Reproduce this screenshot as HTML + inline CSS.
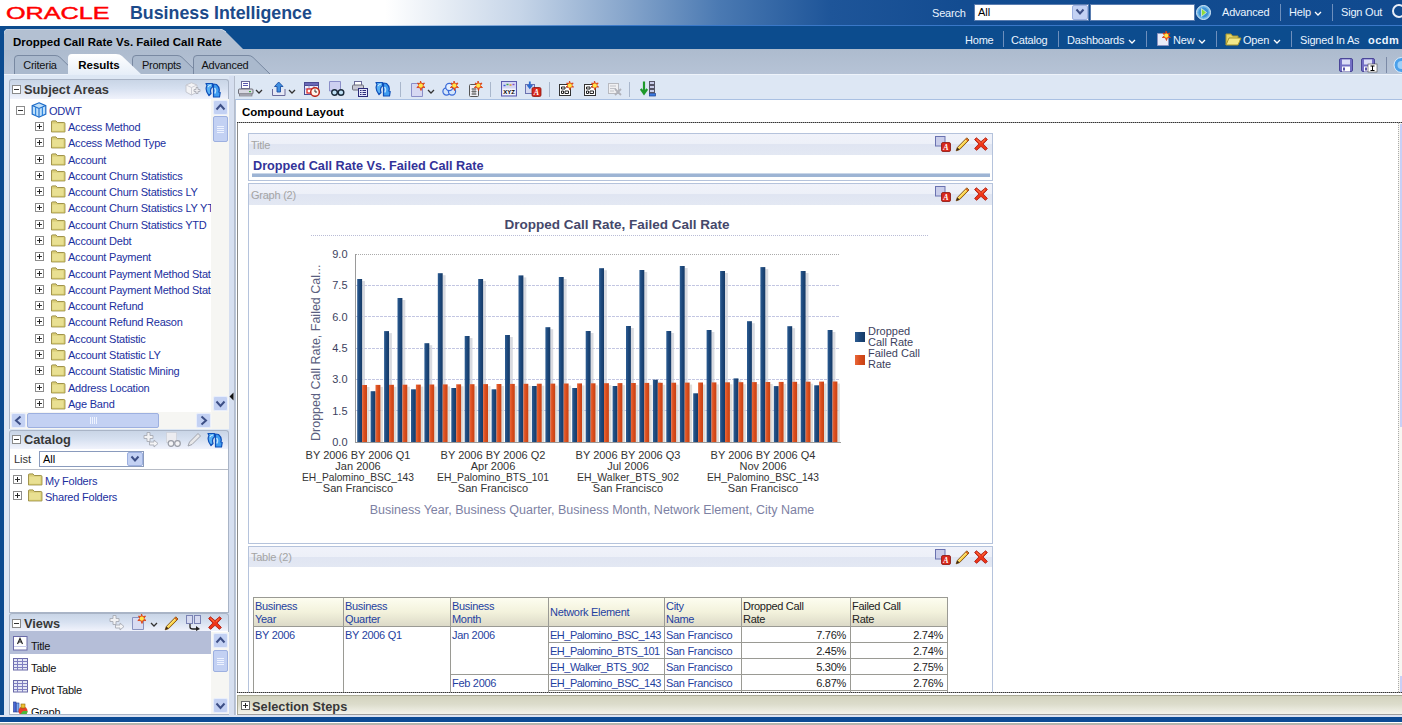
<!DOCTYPE html>
<html>
<head>
<meta charset="utf-8">
<title>Oracle Business Intelligence</title>
<style>
*{box-sizing:border-box;margin:0;padding:0}
html,body{width:1402px;height:725px;overflow:hidden;background:#fff;font-family:"Liberation Sans","DejaVu Sans",sans-serif;font-size:11px;color:#000}
.a{position:absolute}
.t{position:absolute;white-space:nowrap;line-height:14px}
#root{position:relative;width:1402px;height:725px;overflow:hidden;background:#dfe8f4}
#h1{left:0;top:0;width:1402px;height:26px;background:linear-gradient(to right,#ffffff 0,#ffffff 385px,#c6d5e8 520px,#8aa8cd 620px,#4a79b2 720px,#1e5599 830px,#134c91 960px,#104a8f 1402px)}
#h1line{left:330px;top:25px;width:1072px;height:1px;background:linear-gradient(to right,rgba(60,120,200,0),#3a78c8 300px)}
#h2{left:0;top:26px;width:1402px;height:23px;background:#0c4c8e}
#leftedge{left:0;top:26px;width:4px;height:699px;background:#0b4b90}
#logo{left:6px;top:3px;font-size:16.8px;color:#f00;transform:scaleX(1.5);transform-origin:0 0;line-height:22px;-webkit-text-stroke:0.45px #f00}
#bi{left:130px;top:2px;font-size:17.8px;font-weight:bold;color:#1c4a8a;line-height:22px}
.hl{color:#eaf4ff;font-size:11px;letter-spacing:-0.2px}
.sep{position:absolute;width:1px;background:#6d8fbd}
.tab{position:absolute;top:55px;height:20px;padding-top:1px;font-size:11px;letter-spacing:-0.25px;line-height:19px;text-align:center;color:#111}
.tree{color:#1b2f9e;font-size:11px;letter-spacing:-0.22px}
.ph{font-weight:bold;font-size:12.8px;color:#383838;line-height:16px}
.vh{color:#a4a4a4;font-size:11px;letter-spacing:-0.25px}
.pm{position:absolute;width:9px;height:9px;border:1px solid #8c8c8c;background:#fff}
.pm:before{content:"";position:absolute;left:1px;top:3px;width:5px;height:1px;background:#333}
.pm.p:after{content:"";position:absolute;left:3px;top:1px;width:1px;height:5px;background:#222}
.fold{position:absolute;width:15px;height:11px;background:linear-gradient(#ece49a,#cfc36a);border:1px solid #9a8c3a;border-radius:1px}
.fold:before{content:"";position:absolute;left:-1px;top:-3px;width:7px;height:3px;background:#ddd27e;border:1px solid #9a8c3a;border-bottom:none;border-radius:1px 1px 0 0}
.sb{position:absolute;background:#c3d1f3;border:1px solid #e8eefc;border-radius:2px}
.sbt{position:absolute;background:#f6f6f3}
.chev{position:absolute;width:7px;height:7px;border:solid #3d4f86;border-width:2px 2px 0 0}
.band{position:absolute;background:linear-gradient(#f0f2fa 0,#edf0f8 50%,#e0e5f2 50%,#e3e8f3 100%)}
.view{position:absolute;border:1px solid #b5c3dc;background:#fff}
.cx{color:#3a3a3a;font-family:"Liberation Sans",sans-serif}
table{border-collapse:collapse}
</style>
</head>
<body>
<div id="root">
<div class="a" id="h1"></div><div class="a" id="h1line"></div><div class="a" id="h2"></div><div class="a" id="leftedge"></div>
<div class="t" id="logo">ORACLE</div>
<div class="t" id="bi">Business Intelligence</div>
<div class="t hl" style="left:932px;top:6px;">Search</div>
<div class="a" style="left:974px;top:4px;width:115px;height:17px;background:#fff;border:1px solid #5a7db0"></div>
<div class="t" style="left:978px;top:5px;font-size:11px;color:#000">All</div>
<div class="a" style="left:1072px;top:5px;width:16px;height:15px;background:#c3d1f3;border:1px solid #9db0e0;border-radius:2px"></div>
<svg class="a" style="left:1075px;top:8px" width="10" height="8" viewBox="0 0 10 8"><path d="M1.5 1.5 L5 5.5 L8.5 1.5" fill="none" stroke="#3d4f86" stroke-width="2"/></svg>
<div class="a" style="left:1090px;top:4px;width:105px;height:17px;background:#fff;border:1px solid #5a7db0"></div>
<svg class="a" style="left:1196px;top:5px" width="15" height="15" viewBox="0 0 15 15"><circle cx="7.5" cy="7.5" r="7" fill="#6fb6e8" stroke="#d9ecfa" stroke-width="1"/><circle cx="7.5" cy="7.5" r="5" fill="#3f94d6"/><path d="M5.5 3.5 L10.5 7.5 L5.5 11.5 Z" fill="#8fdc3a" stroke="#fff" stroke-width="0.6"/></svg>
<div class="t hl" style="left:1222px;top:5px;">Advanced</div>
<div class="sep" style="left:1280px;top:4px;height:17px;background:#6d8fbd"></div>
<div class="t hl" style="left:1289px;top:5px;">Help</div>
<svg class="a" style="left:1314px;top:11px" width="8" height="6" viewBox="0 0 8 6"><path d="M1 1 L4 4 L7 1" fill="none" stroke="#fff" stroke-width="1.3"/></svg>
<div class="sep" style="left:1332px;top:4px;height:17px;background:#6d8fbd"></div>
<div class="t hl" style="left:1341px;top:5px;">Sign Out</div>
<svg class="a" style="left:1391px;top:4px" width="11" height="16" viewBox="0 0 11 16"><circle cx="8" cy="7" r="6" fill="none" stroke="#e8eef8" stroke-width="2"/></svg>
<div class="t hl" style="left:965px;top:33px;">Home</div>
<div class="sep" style="left:1003px;top:31px;height:16px;background:#6d8fbd"></div>
<div class="t hl" style="left:1011px;top:33px;">Catalog</div>
<div class="sep" style="left:1058px;top:31px;height:16px;background:#6d8fbd"></div>
<div class="t hl" style="left:1067px;top:33px;">Dashboards</div>
<svg class="a" style="left:1128px;top:39px" width="8" height="6" viewBox="0 0 8 6"><path d="M1 1 L4 4 L7 1" fill="none" stroke="#fff" stroke-width="1.3"/></svg>
<div class="sep" style="left:1146px;top:31px;height:16px;background:#6d8fbd"></div>
<svg class="a" style="left:1155px;top:31px" width="16" height="16" viewBox="0 0 16 16"><path d="M2.5 2.5 H10 L13.5 6 V14.5 H2.5 Z" fill="#e8ecf8" stroke="#8a93c0"/><path d="M11 0 L12.2 2.8 L15 2 L13.4 4.5 L15.5 6.5 L12.5 6.6 L11.5 9.5 L10.3 6.6 L7.3 6.5 L9.5 4.5 L8 2 L10.5 2.8 Z" fill="#f0641e" stroke="#d83a10" stroke-width="0.8"/><circle cx="11.3" cy="4.6" r="2.100" fill="#ffe648"/></svg>
<div class="t hl" style="left:1173px;top:33px;">New</div>
<svg class="a" style="left:1198px;top:39px" width="8" height="6" viewBox="0 0 8 6"><path d="M1 1 L4 4 L7 1" fill="none" stroke="#fff" stroke-width="1.3"/></svg>
<div class="sep" style="left:1216px;top:31px;height:16px;background:#6d8fbd"></div>
<svg class="a" style="left:1225px;top:32px" width="17" height="14" viewBox="0 0 17 14"><path d="M1 13 V2 H6 L7.5 4 H13 V6" fill="#e4d56a" stroke="#a8962c"/><path d="M1 13 L4 6 H16 L13 13 Z" fill="#f2e88a" stroke="#a8962c"/></svg>
<div class="t hl" style="left:1243px;top:33px;">Open</div>
<svg class="a" style="left:1273px;top:39px" width="8" height="6" viewBox="0 0 8 6"><path d="M1 1 L4 4 L7 1" fill="none" stroke="#fff" stroke-width="1.3"/></svg>
<div class="sep" style="left:1291px;top:31px;height:16px;background:#6d8fbd"></div>
<div class="t hl" style="left:1300px;top:33px;">Signed In As</div>
<div class="t hl" style="left:1368px;top:33px;font-weight:bold;letter-spacing:0.5px">ocdm</div>
<div class="a" style="left:4px;top:49px;width:1398px;height:26px;background:linear-gradient(#adbbce,#b6c3d6)"></div>
<svg class="a" style="left:4px;top:29px" width="250" height="21" viewBox="0 0 250 21"><path d="M0 21 V5 Q0 0 5 0 H214 Q219 0 222 3 L240 21 Z" fill="#b3c0d2"/><path d="M0 5 Q0 0 5 0 H214 Q219 0 222 3" fill="none" stroke="#d3dde9" stroke-width="1"/></svg>
<div class="t" style="left:13px;top:35px;font-size:11.5px;font-weight:bold;color:#000;letter-spacing:0px">Dropped Call Rate Vs. Failed Call Rate</div>
<div class="a" style="left:4px;top:74px;width:1398px;height:642px;background:#dde7f4"></div>
<div class="a" style="left:4px;top:74px;width:1398px;height:1px;background:#eef3fa"></div>
<svg class="a" style="left:14px;top:55px" width="71" height="19" viewBox="0 0 71 20" preserveAspectRatio="none"><path d="M0.5 20 V4 Q0.5 0.5 4 0.5 H41 Q44 0.5 46 2.5 L63 20" fill="#aab9cd" stroke="#76879f" stroke-width="1"/></svg>
<svg class="a" style="left:132px;top:55px" width="75" height="19" viewBox="0 0 75 20" preserveAspectRatio="none"><path d="M0.5 20 V4 Q0.5 0.5 4 0.5 H45 Q48 0.5 50 2.5 L67 20" fill="#aab9cd" stroke="#76879f" stroke-width="1"/></svg>
<svg class="a" style="left:193px;top:55px" width="85" height="19" viewBox="0 0 85 20" preserveAspectRatio="none"><path d="M0.5 20 V4 Q0.5 0.5 4 0.5 H55 Q58 0.5 60 2.5 L77 20" fill="#aab9cd" stroke="#76879f" stroke-width="1"/></svg>
<svg class="a" style="left:68px;top:54px" width="78" height="21" viewBox="0 0 78 22" preserveAspectRatio="none"><defs><linearGradient id="ga" x1="0" y1="0" x2="0" y2="1"><stop offset="0" stop-color="#fff"/><stop offset="1" stop-color="#e6eef8"/></linearGradient></defs><path d="M0 22 V4 Q0 0 4 0 H48 Q52 0 54 2 L74 22 Z" fill="url(#ga)"/></svg>
<div class="tab" style="left:14px;width:52px">Criteria</div>
<div class="tab" style="left:68px;width:62px;font-weight:bold;color:#000;font-size:11.5px;letter-spacing:0">Results</div>
<div class="tab" style="left:134px;width:55px">Prompts</div>
<div class="tab" style="left:193px;width:64px">Advanced</div>
<svg class="a" style="left:1339px;top:57px" width="17" height="16" viewBox="0 0 17 16"><rect x="0.5" y="1.5" width="13" height="13" rx="1.5" fill="#7470c4" stroke="#4a4698"/><rect x="3" y="2.5" width="8" height="5" fill="#dcdef6"/><rect x="3" y="9.5" width="8" height="5" fill="#fff"/><rect x="4" y="10.5" width="2" height="3" fill="#5a55a8"/></svg>
<svg class="a" style="left:1361px;top:57px" width="17" height="16" viewBox="0 0 17 16"><rect x="0.5" y="1.5" width="13" height="13" rx="1.5" fill="#7470c4" stroke="#4a4698"/><rect x="3" y="2.5" width="8" height="5" fill="#dcdef6"/><rect x="3" y="9.5" width="8" height="5" fill="#fff"/><rect x="4" y="10.5" width="2" height="3" fill="#5a55a8"/><rect x="7" y="7" width="9" height="8" fill="#fff" stroke="#444" stroke-width="0.6"/><path d="M9.5 9 H13.5 M11.5 9 V13.5 M9.5 13.5 H13.5" stroke="#000" stroke-width="1" fill="none"/></svg>
<div class="sep" style="left:1386px;top:57px;height:16px;background:#7b8aa6"></div>
<svg class="a" style="left:1393px;top:57px" width="9" height="16" viewBox="0 0 9 16"><circle cx="8.5" cy="8" r="7.5" fill="#4aa0ea" stroke="#dfeefc"/><circle cx="8.5" cy="8" r="4" fill="#9fd0f8"/></svg>
<div class="a" style="left:9px;top:79px;width:220px;height:21px;background:linear-gradient(#c9d5e6,#d6e0f0 45%,#f1f3fc);border:1px solid #a9b4c6;border-bottom:1px solid #d4dae6;border-radius:3px 3px 0 0"></div>
<div class="pm" style="left:12px;top:85px;border-color:#8a8a8a"></div>
<div class="t ph" style="left:24px;top:82px">Subject Areas</div>
<svg class="a" style="left:185px;top:82px" width="16" height="16" viewBox="0 0 16 16"><path d="M6.500 0.8 L12 3 V10 L6.500 13 L1 10 V3 Z" fill="#f4f4f6" stroke="#c2c4cc" stroke-width="0.9"/><path d="M1 3 L6.500 5.500 L12 3 M6.500 5.500 V13" fill="none" stroke="#c8cad2" stroke-width="0.9"/><path d="M9 7.500 H11 V5.500 H13 V7.500 H15 V9.500 H13 V11.500 H11 V9.500 H9 Z" fill="#ececf0" stroke="#a4a7b0" stroke-width="0.8"/></svg>
<svg class="a" style="left:205px;top:82px" width="16" height="16" viewBox="0 0 16 16"><path d="M1 1.500 H7.500 V5 Q4.500 6.500 6 11.500 L4 13.500 Q-0.5 8 2 3.500 Z" fill="#58b0f4" stroke="#0f4fb8" stroke-width="1.200" stroke-linejoin="round"/><path d="M8.500 2 L11.500 2.500 Q15.500 6 13.800 10 L15.200 10.500 L14.500 15 H8.500 Z" fill="#3f9cf0" stroke="#0f4fb8" stroke-width="1.200" stroke-linejoin="round"/><path d="M9.500 6 Q11.500 8 9.800 11.500" fill="none" stroke="#bfe2ff" stroke-width="1.400"/><path d="M3 5 Q3.500 3.500 6 3" fill="none" stroke="#c8e8ff" stroke-width="1.200"/></svg>
<div class="a" style="left:9px;top:99px;width:220px;height:330px;background:#fff;border:1px solid #a9b4c6;border-top:none"></div>
<div class="pm" style="left:16px;top:106px"></div>
<svg class="a" style="left:31px;top:102px" width="16" height="16" viewBox="0 0 16 16"><path d="M8 0.8 L14.8 3.6 V12 L8 15.2 L1.2 12 V3.6 Z" fill="#bfe0fa" stroke="#1c6bc8" stroke-width="1.2"/><path d="M1.2 3.6 L8 6.4 L14.8 3.6 M8 6.4 V15.2" fill="none" stroke="#1c6bc8" stroke-width="1.1"/><path d="M4.6 5 V13.6 M11.4 5 V13.6" stroke="#2f86e0" stroke-width="1.2"/></svg>
<div class="t tree" style="left:49px;top:104px">ODWT</div>
<div class="a" style="left:10px;top:99px;width:201px;height:313px;overflow:hidden">
<div class="pm p" style="left:25px;top:23.0px"></div>
<svg class="a" style="left:41px;top:21.0px" width="14.500" height="13" viewBox="0 0 16 14"><path d="M0.5 13 V2 Q0.5 0.8 1.8 0.8 H5.5 L7 2.6 H14.2 Q15.4 2.6 15.4 3.8 V13 Z" fill="#d9cd78" stroke="#8e7f30" stroke-width="0.9"/><rect x="1.4" y="3.8" width="13.2" height="8.6" fill="#e9e092"/><path d="M1.4 12.4 H14.6 V4" fill="none" stroke="#bfb25a" stroke-width="1"/></svg>
<div class="t tree" style="left:58px;top:21.0px">Access Method</div>
<div class="pm p" style="left:25px;top:39.3px"></div>
<svg class="a" style="left:41px;top:37.3px" width="14.500" height="13" viewBox="0 0 16 14"><path d="M0.5 13 V2 Q0.5 0.8 1.8 0.8 H5.5 L7 2.6 H14.2 Q15.4 2.6 15.4 3.8 V13 Z" fill="#d9cd78" stroke="#8e7f30" stroke-width="0.9"/><rect x="1.4" y="3.8" width="13.2" height="8.6" fill="#e9e092"/><path d="M1.4 12.4 H14.6 V4" fill="none" stroke="#bfb25a" stroke-width="1"/></svg>
<div class="t tree" style="left:58px;top:37.3px">Access Method Type</div>
<div class="pm p" style="left:25px;top:55.6px"></div>
<svg class="a" style="left:41px;top:53.6px" width="14.500" height="13" viewBox="0 0 16 14"><path d="M0.5 13 V2 Q0.5 0.8 1.8 0.8 H5.5 L7 2.6 H14.2 Q15.4 2.6 15.4 3.8 V13 Z" fill="#d9cd78" stroke="#8e7f30" stroke-width="0.9"/><rect x="1.4" y="3.8" width="13.2" height="8.6" fill="#e9e092"/><path d="M1.4 12.4 H14.6 V4" fill="none" stroke="#bfb25a" stroke-width="1"/></svg>
<div class="t tree" style="left:58px;top:53.6px">Account</div>
<div class="pm p" style="left:25px;top:71.8px"></div>
<svg class="a" style="left:41px;top:69.8px" width="14.500" height="13" viewBox="0 0 16 14"><path d="M0.5 13 V2 Q0.5 0.8 1.8 0.8 H5.5 L7 2.6 H14.2 Q15.4 2.6 15.4 3.8 V13 Z" fill="#d9cd78" stroke="#8e7f30" stroke-width="0.9"/><rect x="1.4" y="3.8" width="13.2" height="8.6" fill="#e9e092"/><path d="M1.4 12.4 H14.6 V4" fill="none" stroke="#bfb25a" stroke-width="1"/></svg>
<div class="t tree" style="left:58px;top:69.8px">Account Churn Statistics</div>
<div class="pm p" style="left:25px;top:88.1px"></div>
<svg class="a" style="left:41px;top:86.1px" width="14.500" height="13" viewBox="0 0 16 14"><path d="M0.5 13 V2 Q0.5 0.8 1.8 0.8 H5.5 L7 2.6 H14.2 Q15.4 2.6 15.4 3.8 V13 Z" fill="#d9cd78" stroke="#8e7f30" stroke-width="0.9"/><rect x="1.4" y="3.8" width="13.2" height="8.6" fill="#e9e092"/><path d="M1.4 12.4 H14.6 V4" fill="none" stroke="#bfb25a" stroke-width="1"/></svg>
<div class="t tree" style="left:58px;top:86.1px">Account Churn Statistics LY</div>
<div class="pm p" style="left:25px;top:104.4px"></div>
<svg class="a" style="left:41px;top:102.4px" width="14.500" height="13" viewBox="0 0 16 14"><path d="M0.5 13 V2 Q0.5 0.8 1.8 0.8 H5.5 L7 2.6 H14.2 Q15.4 2.6 15.4 3.8 V13 Z" fill="#d9cd78" stroke="#8e7f30" stroke-width="0.9"/><rect x="1.4" y="3.8" width="13.2" height="8.6" fill="#e9e092"/><path d="M1.4 12.4 H14.6 V4" fill="none" stroke="#bfb25a" stroke-width="1"/></svg>
<div class="t tree" style="left:58px;top:102.4px">Account Churn Statistics LY YTD</div>
<div class="pm p" style="left:25px;top:120.7px"></div>
<svg class="a" style="left:41px;top:118.7px" width="14.500" height="13" viewBox="0 0 16 14"><path d="M0.5 13 V2 Q0.5 0.8 1.8 0.8 H5.5 L7 2.6 H14.2 Q15.4 2.6 15.4 3.8 V13 Z" fill="#d9cd78" stroke="#8e7f30" stroke-width="0.9"/><rect x="1.4" y="3.8" width="13.2" height="8.6" fill="#e9e092"/><path d="M1.4 12.4 H14.6 V4" fill="none" stroke="#bfb25a" stroke-width="1"/></svg>
<div class="t tree" style="left:58px;top:118.7px">Account Churn Statistics YTD</div>
<div class="pm p" style="left:25px;top:137.0px"></div>
<svg class="a" style="left:41px;top:135.0px" width="14.500" height="13" viewBox="0 0 16 14"><path d="M0.5 13 V2 Q0.5 0.8 1.8 0.8 H5.5 L7 2.6 H14.2 Q15.4 2.6 15.4 3.8 V13 Z" fill="#d9cd78" stroke="#8e7f30" stroke-width="0.9"/><rect x="1.4" y="3.8" width="13.2" height="8.6" fill="#e9e092"/><path d="M1.4 12.4 H14.6 V4" fill="none" stroke="#bfb25a" stroke-width="1"/></svg>
<div class="t tree" style="left:58px;top:135.0px">Account Debt</div>
<div class="pm p" style="left:25px;top:153.2px"></div>
<svg class="a" style="left:41px;top:151.2px" width="14.500" height="13" viewBox="0 0 16 14"><path d="M0.5 13 V2 Q0.5 0.8 1.8 0.8 H5.5 L7 2.6 H14.2 Q15.4 2.6 15.4 3.8 V13 Z" fill="#d9cd78" stroke="#8e7f30" stroke-width="0.9"/><rect x="1.4" y="3.8" width="13.2" height="8.6" fill="#e9e092"/><path d="M1.4 12.4 H14.6 V4" fill="none" stroke="#bfb25a" stroke-width="1"/></svg>
<div class="t tree" style="left:58px;top:151.2px">Account Payment</div>
<div class="pm p" style="left:25px;top:169.5px"></div>
<svg class="a" style="left:41px;top:167.5px" width="14.500" height="13" viewBox="0 0 16 14"><path d="M0.5 13 V2 Q0.5 0.8 1.8 0.8 H5.5 L7 2.6 H14.2 Q15.4 2.6 15.4 3.8 V13 Z" fill="#d9cd78" stroke="#8e7f30" stroke-width="0.9"/><rect x="1.4" y="3.8" width="13.2" height="8.6" fill="#e9e092"/><path d="M1.4 12.4 H14.6 V4" fill="none" stroke="#bfb25a" stroke-width="1"/></svg>
<div class="t tree" style="left:58px;top:167.5px">Account Payment Method Statistics</div>
<div class="pm p" style="left:25px;top:185.8px"></div>
<svg class="a" style="left:41px;top:183.8px" width="14.500" height="13" viewBox="0 0 16 14"><path d="M0.5 13 V2 Q0.5 0.8 1.8 0.8 H5.5 L7 2.6 H14.2 Q15.4 2.6 15.4 3.8 V13 Z" fill="#d9cd78" stroke="#8e7f30" stroke-width="0.9"/><rect x="1.4" y="3.8" width="13.2" height="8.6" fill="#e9e092"/><path d="M1.4 12.4 H14.6 V4" fill="none" stroke="#bfb25a" stroke-width="1"/></svg>
<div class="t tree" style="left:58px;top:183.8px">Account Payment Method Statistics LY</div>
<div class="pm p" style="left:25px;top:202.1px"></div>
<svg class="a" style="left:41px;top:200.1px" width="14.500" height="13" viewBox="0 0 16 14"><path d="M0.5 13 V2 Q0.5 0.8 1.8 0.8 H5.5 L7 2.6 H14.2 Q15.4 2.6 15.4 3.8 V13 Z" fill="#d9cd78" stroke="#8e7f30" stroke-width="0.9"/><rect x="1.4" y="3.8" width="13.2" height="8.6" fill="#e9e092"/><path d="M1.4 12.4 H14.6 V4" fill="none" stroke="#bfb25a" stroke-width="1"/></svg>
<div class="t tree" style="left:58px;top:200.1px">Account Refund</div>
<div class="pm p" style="left:25px;top:218.4px"></div>
<svg class="a" style="left:41px;top:216.4px" width="14.500" height="13" viewBox="0 0 16 14"><path d="M0.5 13 V2 Q0.5 0.8 1.8 0.8 H5.5 L7 2.6 H14.2 Q15.4 2.6 15.4 3.8 V13 Z" fill="#d9cd78" stroke="#8e7f30" stroke-width="0.9"/><rect x="1.4" y="3.8" width="13.2" height="8.6" fill="#e9e092"/><path d="M1.4 12.4 H14.6 V4" fill="none" stroke="#bfb25a" stroke-width="1"/></svg>
<div class="t tree" style="left:58px;top:216.4px">Account Refund Reason</div>
<div class="pm p" style="left:25px;top:234.6px"></div>
<svg class="a" style="left:41px;top:232.6px" width="14.500" height="13" viewBox="0 0 16 14"><path d="M0.5 13 V2 Q0.5 0.8 1.8 0.8 H5.5 L7 2.6 H14.2 Q15.4 2.6 15.4 3.8 V13 Z" fill="#d9cd78" stroke="#8e7f30" stroke-width="0.9"/><rect x="1.4" y="3.8" width="13.2" height="8.6" fill="#e9e092"/><path d="M1.4 12.4 H14.6 V4" fill="none" stroke="#bfb25a" stroke-width="1"/></svg>
<div class="t tree" style="left:58px;top:232.6px">Account Statistic</div>
<div class="pm p" style="left:25px;top:250.9px"></div>
<svg class="a" style="left:41px;top:248.9px" width="14.500" height="13" viewBox="0 0 16 14"><path d="M0.5 13 V2 Q0.5 0.8 1.8 0.8 H5.5 L7 2.6 H14.2 Q15.4 2.6 15.4 3.8 V13 Z" fill="#d9cd78" stroke="#8e7f30" stroke-width="0.9"/><rect x="1.4" y="3.8" width="13.2" height="8.6" fill="#e9e092"/><path d="M1.4 12.4 H14.6 V4" fill="none" stroke="#bfb25a" stroke-width="1"/></svg>
<div class="t tree" style="left:58px;top:248.9px">Account Statistic LY</div>
<div class="pm p" style="left:25px;top:267.2px"></div>
<svg class="a" style="left:41px;top:265.2px" width="14.500" height="13" viewBox="0 0 16 14"><path d="M0.5 13 V2 Q0.5 0.8 1.8 0.8 H5.5 L7 2.6 H14.2 Q15.4 2.6 15.4 3.8 V13 Z" fill="#d9cd78" stroke="#8e7f30" stroke-width="0.9"/><rect x="1.4" y="3.8" width="13.2" height="8.6" fill="#e9e092"/><path d="M1.4 12.4 H14.6 V4" fill="none" stroke="#bfb25a" stroke-width="1"/></svg>
<div class="t tree" style="left:58px;top:265.2px">Account Statistic Mining</div>
<div class="pm p" style="left:25px;top:283.5px"></div>
<svg class="a" style="left:41px;top:281.5px" width="14.500" height="13" viewBox="0 0 16 14"><path d="M0.5 13 V2 Q0.5 0.8 1.8 0.8 H5.5 L7 2.6 H14.2 Q15.4 2.6 15.4 3.8 V13 Z" fill="#d9cd78" stroke="#8e7f30" stroke-width="0.9"/><rect x="1.4" y="3.8" width="13.2" height="8.6" fill="#e9e092"/><path d="M1.4 12.4 H14.6 V4" fill="none" stroke="#bfb25a" stroke-width="1"/></svg>
<div class="t tree" style="left:58px;top:281.5px">Address Location</div>
<div class="pm p" style="left:25px;top:299.8px"></div>
<svg class="a" style="left:41px;top:297.8px" width="14.500" height="13" viewBox="0 0 16 14"><path d="M0.5 13 V2 Q0.5 0.8 1.8 0.8 H5.5 L7 2.6 H14.2 Q15.4 2.6 15.4 3.8 V13 Z" fill="#d9cd78" stroke="#8e7f30" stroke-width="0.9"/><rect x="1.4" y="3.8" width="13.2" height="8.6" fill="#e9e092"/><path d="M1.4 12.4 H14.6 V4" fill="none" stroke="#bfb25a" stroke-width="1"/></svg>
<div class="t tree" style="left:58px;top:297.8px">Age Band</div>
</div>
<div class="sbt" style="left:211px;top:99px;width:18px;height:313px"></div>
<div class="sb" style="left:213px;top:100px;width:15px;height:15px"></div>
<svg class="a" style="left:215px;top:103px" width="11" height="8" viewBox="0 0 11 8"><path d="M1.500 6.500 L5.500 2 L9.500 6.500" fill="none" stroke="#3d4f86" stroke-width="2"/></svg>
<div class="sb" style="left:213px;top:396px;width:15px;height:15px"></div>
<svg class="a" style="left:215px;top:400px" width="11" height="8" viewBox="0 0 11 8"><path d="M1.500 1.500 L5.500 6 L9.500 1.500" fill="none" stroke="#3d4f86" stroke-width="2"/></svg>
<div class="sb" style="left:213px;top:116px;width:15px;height:26px;border-color:#9db0e0"></div>
<div class="a" style="left:217px;top:126px;width:7px;height:1px;background:#eef3ff"></div>
<div class="a" style="left:217px;top:128px;width:7px;height:1px;background:#eef3ff"></div>
<div class="a" style="left:217px;top:130px;width:7px;height:1px;background:#eef3ff"></div>
<div class="a" style="left:217px;top:132px;width:7px;height:1px;background:#eef3ff"></div>
<div class="sbt" style="left:10px;top:412px;width:202px;height:17px"></div>
<div class="a" style="left:212px;top:412px;width:17px;height:17px;background:#f4f4f0"></div>
<div class="sb" style="left:11px;top:413px;width:15px;height:15px"></div>
<svg class="a" style="left:14px;top:415px" width="8" height="11" viewBox="0 0 8 11"><path d="M6.5 1.5 L2 5.5 L6.5 9.5" fill="none" stroke="#3d4f86" stroke-width="2"/></svg>
<div class="sb" style="left:196px;top:413px;width:15px;height:15px"></div>
<svg class="a" style="left:200px;top:415px" width="8" height="11" viewBox="0 0 8 11"><path d="M1.5 1.5 L6 5.5 L1.5 9.5" fill="none" stroke="#3d4f86" stroke-width="2"/></svg>
<div class="sb" style="left:27px;top:413px;width:132px;height:15px;border-color:#9db0e0"></div>
<div class="a" style="left:90px;top:417px;width:1px;height:7px;background:#eef3ff"></div>
<div class="a" style="left:92px;top:417px;width:1px;height:7px;background:#eef3ff"></div>
<div class="a" style="left:94px;top:417px;width:1px;height:7px;background:#eef3ff"></div>
<div class="a" style="left:96px;top:417px;width:1px;height:7px;background:#eef3ff"></div>
<div class="a" style="left:9px;top:430px;width:220px;height:20px;background:linear-gradient(#c9d5e6,#d6e0f0 45%,#f1f3fc);border:1px solid #a9b4c6;border-bottom:1px solid #d4dae6;border-radius:3px 3px 0 0"></div>
<div class="pm" style="left:12px;top:435px;border-color:#8a8a8a"></div>
<div class="t ph" style="left:24px;top:432px">Catalog</div>
<svg class="a" style="left:143px;top:432px" width="16" height="16" viewBox="0 0 16 16"><path d="M4 0.5 H7 V3.500 H10 V6.500 H7 V9.500 H4 V6.500 H1 V3.500 H4 Z" fill="#f2f2f4" stroke="#a8abb4" stroke-width="0.9"/><path d="M6.500 10 H11 V8 L15 11.500 L11 15 V13 H6.500 Z" fill="#f4f4f6" stroke="#a8abb4" stroke-width="0.9"/></svg>
<svg class="a" style="left:165px;top:432px" width="17" height="16" viewBox="0 0 17 16"><rect x="1.500" y="0.5" width="10" height="10" fill="#ececf0" stroke="#c4c6ce" stroke-dasharray="1 1"/><circle cx="6" cy="11.500" r="2.800" fill="#f4f4f6" stroke="#9a9da6" stroke-width="1.200"/><circle cx="12.500" cy="11.500" r="2.800" fill="#f4f4f6" stroke="#9a9da6" stroke-width="1.200"/></svg>
<svg class="a" style="left:186px;top:432px" width="16" height="16" viewBox="0 0 16 16"><path d="M2 14 L3.5 10 L12 1.5 L14.5 4 L6 12.5 Z" fill="#e8e8ea" stroke="#a0a3ac"/></svg>
<svg class="a" style="left:207px;top:432px" width="16" height="16" viewBox="0 0 16 16"><path d="M1 1.500 H7.500 V5 Q4.500 6.500 6 11.500 L4 13.500 Q-0.5 8 2 3.500 Z" fill="#58b0f4" stroke="#0f4fb8" stroke-width="1.200" stroke-linejoin="round"/><path d="M8.500 2 L11.500 2.500 Q15.500 6 13.800 10 L15.200 10.500 L14.500 15 H8.500 Z" fill="#3f9cf0" stroke="#0f4fb8" stroke-width="1.200" stroke-linejoin="round"/><path d="M9.500 6 Q11.500 8 9.800 11.500" fill="none" stroke="#bfe2ff" stroke-width="1.400"/><path d="M3 5 Q3.500 3.500 6 3" fill="none" stroke="#c8e8ff" stroke-width="1.200"/></svg>
<div class="a" style="left:9px;top:449px;width:220px;height:164px;background:#fff;border:1px solid #a9b4c6;border-top:none"></div>
<div class="t" style="left:14px;top:452px;font-size:11px;color:#333">List</div>
<div class="a" style="left:39px;top:451px;width:105px;height:16px;background:#fff;border:1px solid #8a9bbd"></div>
<div class="t" style="left:43px;top:452px;font-size:11px;color:#000">All</div>
<div class="a" style="left:127px;top:452px;width:16px;height:14px;background:#c3d1f3;border:1px solid #9db0e0;border-radius:2px"></div>
<svg class="a" style="left:130px;top:455px" width="10" height="8" viewBox="0 0 10 8"><path d="M1.5 1.5 L5 5.5 L8.5 1.5" fill="none" stroke="#3d4f86" stroke-width="2"/></svg>
<div class="a" style="left:10px;top:469px;width:218px;height:1px;background:#b7bcc6"></div>
<div class="pm p" style="left:13px;top:475.0px"></div>
<svg class="a" style="left:28px;top:473.0px" width="14.500" height="13" viewBox="0 0 16 14"><path d="M0.5 13 V2 Q0.5 0.8 1.8 0.8 H5.5 L7 2.6 H14.2 Q15.4 2.6 15.4 3.8 V13 Z" fill="#d9cd78" stroke="#8e7f30" stroke-width="0.9"/><rect x="1.4" y="3.8" width="13.2" height="8.6" fill="#e9e092"/><path d="M1.4 12.4 H14.6 V4" fill="none" stroke="#bfb25a" stroke-width="1"/></svg>
<div class="t tree" style="left:45px;top:474.0px">My Folders</div>
<div class="pm p" style="left:13px;top:491.3px"></div>
<svg class="a" style="left:28px;top:489.3px" width="14.500" height="13" viewBox="0 0 16 14"><path d="M0.5 13 V2 Q0.5 0.8 1.8 0.8 H5.5 L7 2.6 H14.2 Q15.4 2.6 15.4 3.8 V13 Z" fill="#d9cd78" stroke="#8e7f30" stroke-width="0.9"/><rect x="1.4" y="3.8" width="13.2" height="8.6" fill="#e9e092"/><path d="M1.4 12.4 H14.6 V4" fill="none" stroke="#bfb25a" stroke-width="1"/></svg>
<div class="t tree" style="left:45px;top:490.3px">Shared Folders</div>
<div class="a" style="left:9px;top:613px;width:220px;height:19px;background:linear-gradient(#c9d5e6,#d6e0f0 45%,#f1f3fc);border:1px solid #a9b4c6;border-bottom:1px solid #d4dae6;border-radius:3px 3px 0 0"></div>
<div class="pm" style="left:12px;top:619px;border-color:#8a8a8a"></div>
<div class="t ph" style="left:24px;top:616px">Views</div>
<svg class="a" style="left:109px;top:615px" width="16" height="16" viewBox="0 0 16 16"><path d="M4 0.5 H7 V3.500 H10 V6.500 H7 V9.500 H4 V6.500 H1 V3.500 H4 Z" fill="#f2f2f4" stroke="#a8abb4" stroke-width="0.9"/><path d="M6.500 10 H11 V8 L15 11.500 L11 15 V13 H6.500 Z" fill="#f4f4f6" stroke="#a8abb4" stroke-width="0.9"/></svg>
<svg class="a" style="left:131px;top:614px" width="16" height="17" viewBox="0 0 16 17"><path d="M1.5 3.5 H9 L12.5 7 V15.5 H1.5 Z" fill="#d9dcf2" stroke="#8a93c0"/><path d="M10.5 0 L11.7 2.8 L14.5 2 L12.9 4.5 L15 6.5 L12 6.6 L11 9.5 L9.8 6.6 L6.8 6.5 L9 4.5 L7.5 2 L10 2.8 Z" fill="#f0641e" stroke="#d83a10" stroke-width="0.8"/><circle cx="10.8" cy="4.6" r="2.100" fill="#ffe648"/></svg>
<svg class="a" style="left:150px;top:622px" width="8" height="6" viewBox="0 0 8 6"><path d="M1 1 L4 4 L7 1" fill="none" stroke="#333" stroke-width="1.3"/></svg>
<svg class="a" style="left:164px;top:615px" width="16" height="16" viewBox="0 0 16 16"><path d="M1.200 14.800 L2.400 11.400 L11.800 1.800 L14 4 L4.600 13.600 Z" fill="#f8cc3a" stroke="#7a4a0c" stroke-width="0.9" stroke-linejoin="round"/><path d="M3.200 12.200 L12.400 2.900" stroke="#fff0a0" stroke-width="0.9"/><path d="M1.200 14.800 L2.400 11.400 L4.600 13.600 Z" fill="#3a2a1a"/><path d="M11 2.700 L13.200 4.900" stroke="#d8501a" stroke-width="1.300"/></svg>
<svg class="a" style="left:186px;top:615px" width="17" height="16" viewBox="0 0 17 16"><rect x="0.5" y="0.5" width="6" height="8" fill="#d6daf0" stroke="#7a82b4"/><rect x="8.500" y="0.5" width="6" height="8" fill="#d6daf0" stroke="#7a82b4"/><path d="M4 9 V12 Q4 14 7 14 H11" fill="none" stroke="#222" stroke-width="1.3"/><path d="M10 11 L14 14 L10 16 Z" fill="#222"/></svg>
<svg class="a" style="left:208px;top:616px" width="14" height="14" viewBox="0 0 15 15"><path d="M2.500 0.800 L7.500 5 L12.500 0.800 L14.300 2.800 L9.800 7.500 L14.300 12.200 L12.300 14.300 L7.500 10 L2.700 14.300 L0.700 12.200 L5.200 7.500 L0.700 2.800 Z" fill="#ee3418" stroke="#a81408" stroke-width="0.9" stroke-linejoin="round"/><path d="M2.700 2.500 L6.800 6.300 M12 2.600 L8.500 6" stroke="#ff8a50" stroke-width="1" fill="none"/></svg>
<div class="a" style="left:9px;top:631px;width:220px;height:84px;background:#fff;border:1px solid #a9b4c6;border-top:none"></div>
<div class="a" style="left:10px;top:631px;width:201px;height:23px;background:#b5bed8"></div>
<svg class="a" style="left:13px;top:636px" width="15" height="15" viewBox="0 0 15 15"><rect x="0.5" y="0.5" width="13.5" height="13.5" fill="#fff" stroke="#6a6aa8"/><path d="M1 10.5 H14" stroke="#c8ccea" stroke-width="1"/><path d="M4.5 8 L7 2.5 L9.500 8 M5.5 6 H8.500" fill="none" stroke="#222" stroke-width="1.2"/></svg>
<div class="t" style="left:31px;top:639px;font-size:11px;letter-spacing:-0.25px;color:#111">Title</div>
<svg class="a" style="left:13px;top:658px" width="15" height="13" viewBox="0 0 15 13"><rect x="0.5" y="0.5" width="14" height="11.5" fill="#e6e8f6" stroke="#6a6aa8"/><path d="M0.5 3.5 H14.5 M0.5 6.5 H14.5 M0.5 9.5 H14.5 M4.5 0.5 V12 M9.5 0.5 V12" stroke="#7f7fc0" stroke-width="1"/></svg>
<div class="t" style="left:31px;top:661px;font-size:11px;letter-spacing:-0.25px;color:#111">Table</div>
<svg class="a" style="left:13px;top:680px" width="15" height="13" viewBox="0 0 15 13"><rect x="0.5" y="0.5" width="14" height="11.5" fill="#e6e8f6" stroke="#6a6aa8"/><path d="M0.5 3.5 H14.5 M0.5 6.5 H14.5 M0.5 9.5 H14.5 M4.5 0.5 V12 M9.5 0.5 V12" stroke="#7f7fc0" stroke-width="1"/></svg>
<div class="t" style="left:31px;top:683px;font-size:11px;letter-spacing:-0.25px;color:#111">Pivot Table</div>
<div class="a" style="left:10px;top:700px;width:201px;height:14px;overflow:hidden">
<svg class="a" style="left:3px;top:1px" width="15" height="14" viewBox="0 0 15 14"><rect x="0.5" y="1" width="2.5" height="10" fill="#4a6ad8" stroke="#223a90" stroke-width="0.6"/><rect x="3.500" y="2" width="2.5" height="9" fill="#7aa8f0" stroke="#223a90" stroke-width="0.6"/><circle cx="10" cy="10" r="4.500" fill="#e8402a"/><path d="M10 10 L14.5 10 A4.5 4.5 0 0 1 7 13.500 Z" fill="#4ab83a"/><rect x="8" y="3" width="4" height="4" fill="#f0c030" stroke="#8a6a10" stroke-width="0.6"/></svg>
<div class="t" style="left:21px;top:5px;font-size:11px;letter-spacing:-0.25px;color:#111">Graph</div>
</div>
<div class="sbt" style="left:211px;top:632px;width:18px;height:82px"></div>
<div class="sb" style="left:213px;top:633px;width:15px;height:15px"></div>
<svg class="a" style="left:215px;top:636px" width="11" height="8" viewBox="0 0 11 8"><path d="M1.500 6.500 L5.500 2 L9.500 6.500" fill="none" stroke="#3d4f86" stroke-width="2"/></svg>
<div class="sb" style="left:213px;top:698px;width:15px;height:15px"></div>
<svg class="a" style="left:215px;top:702px" width="11" height="8" viewBox="0 0 11 8"><path d="M1.500 1.500 L5.500 6 L9.500 1.500" fill="none" stroke="#3d4f86" stroke-width="2"/></svg>
<div class="sb" style="left:213px;top:650px;width:15px;height:22px;border-color:#9db0e0"></div>
<div class="a" style="left:217px;top:658px;width:7px;height:1px;background:#eef3ff"></div>
<div class="a" style="left:217px;top:660px;width:7px;height:1px;background:#eef3ff"></div>
<div class="a" style="left:217px;top:662px;width:7px;height:1px;background:#eef3ff"></div>
<div class="a" style="left:217px;top:664px;width:7px;height:1px;background:#eef3ff"></div>
<div class="a" style="left:229px;top:76px;width:6px;height:639px;background:#d6dff0;border-right:1px solid #b4bccb"></div>
<svg class="a" style="left:229px;top:392px" width="5" height="9" viewBox="0 0 5 9"><path d="M4.5 0.5 L0.5 4.5 L4.5 8.500 Z" fill="#111"/></svg>
<svg class="a" style="left:238px;top:81px" width="16" height="16" viewBox="0 0 16 16"><rect x="3.500" y="0.5" width="8" height="7" fill="#fff" stroke="#6a6a9a"/><path d="M5 2.500 H10 M5 4.500 H10" stroke="#5a5ab0" stroke-width="1"/><rect x="0.5" y="8" width="14.5" height="5" rx="1" fill="#d8d8e2" stroke="#6e6e78"/><rect x="1.500" y="13" width="12.5" height="2" fill="#b8b8c4" stroke="#6e6e78" stroke-width="0.6"/><rect x="11" y="10" width="2" height="1.200" fill="#3ab03a"/></svg>
<svg class="a" style="left:255px;top:89px" width="8" height="6" viewBox="0 0 8 6"><path d="M1 1 L4 4 L7 1" fill="none" stroke="#333" stroke-width="1.3"/></svg>
<svg class="a" style="left:271px;top:81px" width="16" height="16" viewBox="0 0 16 16"><path d="M1.500 8 V14.500 H14 V8" fill="#e6e8f4" stroke="#6a6a9a"/><path d="M7.700 1 L12 5.500 H9.500 V11 H6 V5.500 H3.500 Z" fill="#3f8fe0" stroke="#1c4fa4" stroke-width="0.9"/></svg>
<svg class="a" style="left:288px;top:89px" width="8" height="6" viewBox="0 0 8 6"><path d="M1 1 L4 4 L7 1" fill="none" stroke="#333" stroke-width="1.3"/></svg>
<svg class="a" style="left:304px;top:81px" width="16" height="16" viewBox="0 0 16 16"><rect x="0.5" y="1.500" width="14" height="12" fill="#eef0fb" stroke="#4a4a92"/><rect x="0.5" y="1.500" width="14" height="3" fill="#6a6ab8" stroke="#4a4a92"/><path d="M0.5 8 H14.500 M5 4.500 V13.500 M10 4.500 V13.500" stroke="#8a8ad0" stroke-width="0.9"/><rect x="3" y="8" width="5" height="4" fill="#fff" stroke="#e02018" stroke-width="1.200"/><circle cx="11" cy="11" r="4.300" fill="#fff4ec" stroke="#c0281c" stroke-width="1.500"/><path d="M11 8.500 V11 H13" fill="none" stroke="#333" stroke-width="1"/></svg>
<svg class="a" style="left:328px;top:81px" width="17" height="16" viewBox="0 0 17 16"><path d="M1.500 0.5 H12.500 V10 H1.500 Z" fill="#cdd0f0" stroke="#8a8ec8"/><circle cx="6.500" cy="11.500" r="2.800" fill="#bfe0f4" stroke="#1a2a3a" stroke-width="1.400"/><circle cx="13" cy="11.500" r="2.800" fill="#bfe0f4" stroke="#1a2a3a" stroke-width="1.400"/><path d="M9.500 11 H10" stroke="#222" stroke-width="1.300"/></svg>
<svg class="a" style="left:352px;top:81px" width="17" height="16" viewBox="0 0 17 16"><rect x="2.500" y="0.5" width="7" height="4" fill="#fff" stroke="#6a6a9a"/><rect x="0.5" y="4" width="11" height="5" rx="1" fill="#c8c8d4" stroke="#6e6e78"/><rect x="6.500" y="7.500" width="9" height="8" fill="#e4e6fa" stroke="#2a2a7a"/><path d="M8 9.500 H9.500 M10.500 9.500 H14 M8 11.500 H9.500 M10.500 11.500 H14 M8 13.500 H9.500 M10.500 13.500 H14" stroke="#2a2a7a" stroke-width="1"/></svg>
<svg class="a" style="left:375px;top:81px" width="16" height="16" viewBox="0 0 16 16"><path d="M1 1.500 H7.500 V5 Q4.500 6.500 6 11.500 L4 13.500 Q-0.5 8 2 3.500 Z" fill="#58b0f4" stroke="#0f4fb8" stroke-width="1.200" stroke-linejoin="round"/><path d="M8.500 2 L11.500 2.500 Q15.500 6 13.800 10 L15.200 10.500 L14.500 15 H8.500 Z" fill="#3f9cf0" stroke="#0f4fb8" stroke-width="1.200" stroke-linejoin="round"/><path d="M9.500 6 Q11.500 8 9.800 11.500" fill="none" stroke="#bfe2ff" stroke-width="1.400"/><path d="M3 5 Q3.500 3.500 6 3" fill="none" stroke="#c8e8ff" stroke-width="1.200"/></svg>
<div class="sep" style="left:400px;top:82px;height:15px;background:#a9b7cc"></div>
<svg class="a" style="left:410px;top:81px" width="16" height="17" viewBox="0 0 16 17"><path d="M1.500 2.500 H12.500 V15.500 H1.500 Z" fill="#d6d8f2" stroke="#8a8ec8"/><path d="M10.500 0 L11.700 2.800 L14.500 2 L12.900 4.500 L15 6.500 L12 6.600 L11 9.500 L9.800 6.600 L6.800 6.500 L9 4.500 L7.500 2 L10 2.800 Z" fill="#f0641e" stroke="#d83a10" stroke-width="0.8"/><circle cx="10.8" cy="4.6" r="2.100" fill="#ffe648"/></svg>
<svg class="a" style="left:427px;top:89px" width="8" height="6" viewBox="0 0 8 6"><path d="M1 1 L4 4 L7 1" fill="none" stroke="#333" stroke-width="1.3"/></svg>
<svg class="a" style="left:442px;top:81px" width="17" height="16" viewBox="0 0 17 16"><circle cx="4.500" cy="10.500" r="3.600" fill="#d4e6fc" stroke="#3a6ad8" stroke-width="1.200"/><circle cx="10" cy="10.500" r="3.600" fill="#d4e6fc" stroke="#3a6ad8" stroke-width="1.200"/><circle cx="7.300" cy="6" r="3.600" fill="#e4f0ff" stroke="#3a6ad8" stroke-width="1.200"/><path d="M12 0 L13.200 2.800 L16 2 L14.400 4.500 L16.500 6.500 L13.500 6.600 L12.500 9.500 L11.300 6.600 L8.300 6.500 L10.500 4.500 L9 2 L11.500 2.800 Z" fill="#f0641e" stroke="#d83a10" stroke-width="0.8"/><circle cx="12.3" cy="4.6" r="2.100" fill="#ffe648"/></svg>
<svg class="a" style="left:467px;top:81px" width="17" height="16" viewBox="0 0 17 16"><rect x="2.500" y="3.500" width="9" height="12" rx="1" fill="#eeeef4" stroke="#555"/><path d="M4.500 8 H9.500 M4.500 10.500 H9.500 M4.500 13 H9.500 M6 7 V14 M8 7 V14" stroke="#666" stroke-width="0.9"/><path d="M11 0 L12.200 2.800 L15 2 L13.400 4.500 L15.500 6.500 L12.500 6.600 L11.500 9.500 L10.300 6.600 L7.300 6.500 L9.500 4.500 L8 2 L10.500 2.800 Z" fill="#f0641e" stroke="#d83a10" stroke-width="0.8"/><circle cx="11.3" cy="4.6" r="2.100" fill="#ffe648"/></svg>
<div class="sep" style="left:490px;top:82px;height:15px;background:#a9b7cc"></div>
<svg class="a" style="left:501px;top:81px" width="16" height="16" viewBox="0 0 16 16"><rect x="0.5" y="0.5" width="15" height="14.500" fill="#d4d6f4" stroke="#5a5ab0"/><path d="M2.500 4.500 h2" stroke="#3a5ad8" stroke-width="1.400"/><path d="M5.500 3.500 h2" stroke="#3aa83a" stroke-width="1.400"/><path d="M8.500 4 h2" stroke="#e0901a" stroke-width="1.400"/><path d="M11.500 3.500 h2" stroke="#8a4ac8" stroke-width="1.400"/><rect x="1.500" y="7.500" width="13" height="6.500" fill="#f4f4fc"/><text x="8" y="13.200" font-size="6" font-weight="bold" fill="#000" text-anchor="middle" font-family="Liberation Sans, sans-serif">XYZ</text></svg>
<svg class="a" style="left:525px;top:81px" width="17" height="16" viewBox="0 0 17 16"><rect x="0.5" y="3.500" width="9" height="9" fill="#d4d8f0" stroke="#6a72b0"/><path d="M4.800 0.5 V6 M2.500 4 L4.800 6.800 L7.200 4" fill="none" stroke="#2a6ad0" stroke-width="1.800"/><rect x="7" y="6.500" width="9" height="9" rx="1.500" fill="#d8281c" stroke="#8a140c" stroke-width="0.8"/><text x="11.500" y="14" font-size="8" font-weight="bold" font-style="italic" fill="#fff" text-anchor="middle" font-family="Liberation Serif, serif">A</text></svg>
<div class="sep" style="left:549px;top:82px;height:15px;background:#a9b7cc"></div>
<svg class="a" style="left:558px;top:81px" width="16" height="16" viewBox="0 0 16 16"><rect x="1.500" y="3.500" width="11" height="11" fill="#fff" stroke="#333"/><path d="M3.500 6 H7 V8 H3.500 Z M8.500 6 H10.500 M3.500 10 H5.500 V12.500 H3.500 Z M7 10 H10.500 V12.500 H7 Z" fill="none" stroke="#222" stroke-width="1"/><path d="M11.500 0 L12.500 2.600 L15.200 2 L13.600 4.200 L15.600 6 L12.800 6.100 L11.800 8.800 L10.800 6.100 L8 6 L10 4.200 L8.600 2 L11 2.600 Z" fill="#f0641e" stroke="#d83a10" stroke-width="0.8"/><circle cx="11.8" cy="4.6" r="2.100" fill="#ffe648"/></svg>
<svg class="a" style="left:583px;top:81px" width="16" height="16" viewBox="0 0 16 16"><rect x="1.500" y="3.500" width="11" height="11" fill="#fff" stroke="#333"/><path d="M3.500 6 H7 V8 H3.500 Z M8.500 6 H10.500 M3.500 10 H5.500 V12.500 H3.500 Z M7 10 H10.500 V12.500 H7 Z" fill="none" stroke="#222" stroke-width="1"/><path d="M11.500 0 L12.500 2.600 L15.200 2 L13.600 4.200 L15.600 6 L12.800 6.100 L11.800 8.800 L10.800 6.100 L8 6 L10 4.200 L8.600 2 L11 2.600 Z" fill="#f0641e" stroke="#d83a10" stroke-width="0.8"/><circle cx="11.8" cy="4.6" r="2.100" fill="#ffe648"/></svg>
<svg class="a" style="left:607px;top:81px" width="16" height="16" viewBox="0 0 16 16"><rect x="1.500" y="2.500" width="10" height="10" fill="#f0f0f2" stroke="#b8bac0"/><path d="M3 5 h6 M3 7.500 h6 M3 10 h4" stroke="#c0c2c8"/><path d="M8 8 L14 14 M14 8 L8 14" stroke="#b0b2ba" stroke-width="1.800"/></svg>
<div class="sep" style="left:629px;top:82px;height:15px;background:#a9b7cc"></div>
<svg class="a" style="left:640px;top:81px" width="17" height="16" viewBox="0 0 17 16"><path d="M4 0.5 V11 M0.800 8 L4 12.500 L7.200 8" fill="none" stroke="#1e9a2a" stroke-width="2.200"/><rect x="9.500" y="0.5" width="5" height="3" fill="#c8cce8" stroke="#556"/><rect x="9.500" y="4.500" width="5" height="3" fill="#c8cce8" stroke="#556"/><rect x="9.500" y="8.500" width="5" height="3" fill="#c8cce8" stroke="#556"/><rect x="9.500" y="12.500" width="6" height="2.500" fill="#3a7ae0" stroke="#1c3f90" stroke-width="0.7"/></svg>
<div class="a" style="left:235px;top:99px;width:1167px;height:616px;background:#fff;border-top:1px solid #a9c0e2;border-left:1px solid #b9c6da"></div>
<div class="t" style="left:242px;top:105px;font-size:11.5px;font-weight:bold;color:#000;letter-spacing:0.02px">Compound Layout</div>
<div class="a" style="left:237px;top:122px;width:1165px;height:571px;border-left:1px solid #888;background:#fff"></div><div class="a" style="left:237px;top:122px;width:1165px;height:1px;background:repeating-linear-gradient(to right,#333 0,#333 1px,#999 1px,#999 2px)"></div>
<div class="a" style="left:1398px;top:123px;width:4px;height:569px;background:#f7f7f2;border-left:1px dotted #aaa"></div>
<div class="a" style="left:1400px;top:124px;width:2px;height:303px;background:#c8d0f6"></div><div class="a" style="left:1400px;top:676px;width:2px;height:16px;background:#c8d0f6"></div>
<div class="view" style="left:248px;top:133px;width:745px;height:48px;"></div>
<div class="band" style="left:249px;top:134px;width:743px;height:21px"></div>
<div class="t vh" style="left:251px;top:138px">Title</div>
<svg class="a" style="left:935px;top:136px" width="16" height="16" viewBox="0 0 16 16"><rect x="0.5" y="0.5" width="9.500" height="9.500" fill="#c9cdea" stroke="#6a72b0"/><rect x="6.500" y="6.500" width="9" height="9" rx="1.500" fill="#d8281c" stroke="#8a140c" stroke-width="0.8"/><text x="11" y="14" font-size="8" font-weight="bold" font-style="italic" fill="#fff" text-anchor="middle" font-family="Liberation Serif, serif">A</text></svg>
<svg class="a" style="left:955px;top:136px" width="16" height="16" viewBox="0 0 16 16"><path d="M1.200 14.800 L2.400 11.400 L11.800 1.800 L14 4 L4.600 13.600 Z" fill="#f8cc3a" stroke="#7a4a0c" stroke-width="0.9" stroke-linejoin="round"/><path d="M3.200 12.200 L12.400 2.900" stroke="#fff0a0" stroke-width="0.9"/><path d="M1.200 14.800 L2.400 11.400 L4.600 13.600 Z" fill="#3a2a1a"/><path d="M11 2.700 L13.200 4.900" stroke="#d8501a" stroke-width="1.300"/></svg>
<svg class="a" style="left:974px;top:137px" width="14" height="14" viewBox="0 0 15 15"><path d="M2.500 0.800 L7.500 5 L12.500 0.800 L14.300 2.800 L9.800 7.500 L14.300 12.200 L12.300 14.300 L7.500 10 L2.700 14.300 L0.700 12.200 L5.200 7.500 L0.700 2.800 Z" fill="#ee3418" stroke="#a81408" stroke-width="0.9" stroke-linejoin="round"/><path d="M2.700 2.500 L6.800 6.300 M12 2.600 L8.500 6" stroke="#ff8a50" stroke-width="1" fill="none"/></svg>
<div class="t" style="left:253px;top:159px;font-size:12.7px;font-weight:bold;color:#333399;letter-spacing:0">Dropped Call Rate Vs. Failed Call Rate</div>
<div class="a" style="left:252px;top:173px;width:738px;height:4px;background:#9db4d4;border-top:1px solid #c9d6e8"></div>
<div class="view" style="left:248px;top:183px;width:745px;height:361px;"></div>
<div class="band" style="left:249px;top:184px;width:743px;height:21px"></div>
<div class="t vh" style="left:251px;top:188px">Graph (2)</div>
<svg class="a" style="left:935px;top:186px" width="16" height="16" viewBox="0 0 16 16"><rect x="0.5" y="0.5" width="9.500" height="9.500" fill="#c9cdea" stroke="#6a72b0"/><rect x="6.500" y="6.500" width="9" height="9" rx="1.500" fill="#d8281c" stroke="#8a140c" stroke-width="0.8"/><text x="11" y="14" font-size="8" font-weight="bold" font-style="italic" fill="#fff" text-anchor="middle" font-family="Liberation Serif, serif">A</text></svg>
<svg class="a" style="left:955px;top:186px" width="16" height="16" viewBox="0 0 16 16"><path d="M1.200 14.800 L2.400 11.400 L11.800 1.800 L14 4 L4.600 13.600 Z" fill="#f8cc3a" stroke="#7a4a0c" stroke-width="0.9" stroke-linejoin="round"/><path d="M3.200 12.200 L12.400 2.900" stroke="#fff0a0" stroke-width="0.9"/><path d="M1.200 14.800 L2.400 11.400 L4.600 13.600 Z" fill="#3a2a1a"/><path d="M11 2.700 L13.200 4.900" stroke="#d8501a" stroke-width="1.300"/></svg>
<svg class="a" style="left:974px;top:187px" width="14" height="14" viewBox="0 0 15 15"><path d="M2.500 0.800 L7.500 5 L12.500 0.800 L14.300 2.800 L9.800 7.500 L14.300 12.200 L12.300 14.300 L7.500 10 L2.700 14.300 L0.700 12.200 L5.200 7.500 L0.700 2.800 Z" fill="#ee3418" stroke="#a81408" stroke-width="0.9" stroke-linejoin="round"/><path d="M2.700 2.500 L6.800 6.300 M12 2.600 L8.500 6" stroke="#ff8a50" stroke-width="1" fill="none"/></svg>
<div class="view" style="left:248px;top:546px;width:745px;height:147px;border-bottom:none"></div>
<div class="band" style="left:249px;top:547px;width:743px;height:20px"></div>
<div class="t vh" style="left:251px;top:550px">Table (2)</div>
<svg class="a" style="left:935px;top:549px" width="16" height="16" viewBox="0 0 16 16"><rect x="0.5" y="0.5" width="9.500" height="9.500" fill="#c9cdea" stroke="#6a72b0"/><rect x="6.500" y="6.500" width="9" height="9" rx="1.500" fill="#d8281c" stroke="#8a140c" stroke-width="0.8"/><text x="11" y="14" font-size="8" font-weight="bold" font-style="italic" fill="#fff" text-anchor="middle" font-family="Liberation Serif, serif">A</text></svg>
<svg class="a" style="left:955px;top:549px" width="16" height="16" viewBox="0 0 16 16"><path d="M1.200 14.800 L2.400 11.400 L11.800 1.800 L14 4 L4.600 13.600 Z" fill="#f8cc3a" stroke="#7a4a0c" stroke-width="0.9" stroke-linejoin="round"/><path d="M3.200 12.200 L12.400 2.900" stroke="#fff0a0" stroke-width="0.9"/><path d="M1.200 14.800 L2.400 11.400 L4.600 13.600 Z" fill="#3a2a1a"/><path d="M11 2.700 L13.200 4.900" stroke="#d8501a" stroke-width="1.300"/></svg>
<svg class="a" style="left:974px;top:550px" width="14" height="14" viewBox="0 0 15 15"><path d="M2.500 0.800 L7.500 5 L12.500 0.800 L14.300 2.800 L9.800 7.500 L14.300 12.200 L12.300 14.300 L7.500 10 L2.700 14.300 L0.700 12.200 L5.200 7.500 L0.700 2.800 Z" fill="#ee3418" stroke="#a81408" stroke-width="0.9" stroke-linejoin="round"/><path d="M2.700 2.500 L6.800 6.300 M12 2.600 L8.500 6" stroke="#ff8a50" stroke-width="1" fill="none"/></svg>
<svg class="a" style="left:248px;top:205px" width="745" height="338" viewBox="248 205 745 338" font-family="Liberation Sans, sans-serif"><defs><linearGradient id="gb" x1="0" y1="0" x2="1" y2="0"><stop offset="0" stop-color="#2d5d93"/><stop offset="0.5" stop-color="#1c477a"/><stop offset="1" stop-color="#163a66"/></linearGradient><linearGradient id="go" x1="0" y1="0" x2="1" y2="0"><stop offset="0" stop-color="#e8683a"/><stop offset="0.5" stop-color="#d94c1c"/><stop offset="1" stop-color="#c64214"/></linearGradient></defs><text x="617" y="229" text-anchor="middle" font-size="13.5" font-weight="bold" fill="#45486a">Dropped Call Rate, Failed Call Rate</text><line x1="311" y1="235.500" x2="929" y2="235.500" stroke="#b9bcd6" stroke-width="1" stroke-dasharray="1 1"/><line x1="356" y1="254.500" x2="840" y2="254.500" stroke="#aaa" stroke-width="1" stroke-dasharray="1 1"/><line x1="356" y1="285.5" x2="840" y2="285.5" stroke="#c3c6e2" stroke-width="1" stroke-dasharray="3 1"/><line x1="356" y1="316.5" x2="840" y2="316.5" stroke="#c3c6e2" stroke-width="1" stroke-dasharray="3 1"/><line x1="356" y1="348.5" x2="840" y2="348.5" stroke="#c3c6e2" stroke-width="1" stroke-dasharray="3 1"/><line x1="356" y1="379.5" x2="840" y2="379.5" stroke="#c3c6e2" stroke-width="1" stroke-dasharray="3 1"/><line x1="356" y1="410.5" x2="840" y2="410.5" stroke="#c3c6e2" stroke-width="1" stroke-dasharray="3 1"/><text x="347.500" y="258.0" text-anchor="end" font-size="11" fill="#3c3f5e">9.0</text><text x="347.500" y="289.3" text-anchor="end" font-size="11" fill="#3c3f5e">7.5</text><text x="347.500" y="320.7" text-anchor="end" font-size="11" fill="#3c3f5e">6.0</text><text x="347.500" y="352.0" text-anchor="end" font-size="11" fill="#3c3f5e">4.5</text><text x="347.500" y="383.3" text-anchor="end" font-size="11" fill="#3c3f5e">3.0</text><text x="347.500" y="414.6" text-anchor="end" font-size="11" fill="#3c3f5e">1.5</text><text x="347.500" y="446.0" text-anchor="end" font-size="11" fill="#3c3f5e">0.0</text><text transform="translate(319.500,441) rotate(-90)" font-size="12.500" fill="#5b5f80">Dropped Call Rate, Failed  Cal...</text><rect x="362.0" y="281.0" width="3" height="161.2" fill="#c9ccd4" opacity="0.7"/><rect x="366.9" y="387.0" width="2.600" height="55.2" fill="#d6d3d0" opacity="0.8"/><rect x="357.2" y="279.0" width="4.900" height="163.2" fill="url(#gb)"/><rect x="362.1" y="385.0" width="4.900" height="57.2" fill="url(#go)"/><rect x="375.4" y="393.2" width="3" height="49.0" fill="#c9ccd4" opacity="0.7"/><rect x="380.3" y="386.9" width="2.600" height="55.3" fill="#d6d3d0" opacity="0.8"/><rect x="370.6" y="391.2" width="4.900" height="51.0" fill="url(#gb)"/><rect x="375.5" y="384.9" width="4.900" height="57.3" fill="url(#go)"/><rect x="388.9" y="333.1" width="3" height="109.1" fill="#c9ccd4" opacity="0.7"/><rect x="393.8" y="386.8" width="2.600" height="55.4" fill="#d6d3d0" opacity="0.8"/><rect x="384.1" y="331.1" width="4.900" height="111.1" fill="url(#gb)"/><rect x="389.0" y="384.8" width="4.900" height="57.4" fill="url(#go)"/><rect x="402.3" y="300.0" width="3" height="142.2" fill="#c9ccd4" opacity="0.7"/><rect x="407.2" y="386.7" width="2.600" height="55.5" fill="#d6d3d0" opacity="0.8"/><rect x="397.5" y="298.0" width="4.900" height="144.2" fill="url(#gb)"/><rect x="402.4" y="384.7" width="4.900" height="57.5" fill="url(#go)"/><rect x="415.8" y="391.3" width="3" height="50.9" fill="#c9ccd4" opacity="0.7"/><rect x="420.7" y="386.6" width="2.600" height="55.6" fill="#d6d3d0" opacity="0.8"/><rect x="411.0" y="389.3" width="4.900" height="52.9" fill="url(#gb)"/><rect x="415.9" y="384.6" width="4.900" height="57.6" fill="url(#go)"/><rect x="429.2" y="345.2" width="3" height="97.0" fill="#c9ccd4" opacity="0.7"/><rect x="434.1" y="386.5" width="2.600" height="55.7" fill="#d6d3d0" opacity="0.8"/><rect x="424.4" y="343.2" width="4.900" height="99.0" fill="url(#gb)"/><rect x="429.3" y="384.5" width="4.900" height="57.7" fill="url(#go)"/><rect x="442.6" y="275.2" width="3" height="167.0" fill="#c9ccd4" opacity="0.7"/><rect x="447.5" y="386.4" width="2.600" height="55.8" fill="#d6d3d0" opacity="0.8"/><rect x="437.8" y="273.2" width="4.900" height="169.0" fill="url(#gb)"/><rect x="442.7" y="384.4" width="4.900" height="57.8" fill="url(#go)"/><rect x="456.1" y="390.0" width="3" height="52.2" fill="#c9ccd4" opacity="0.7"/><rect x="461.0" y="386.3" width="2.600" height="55.9" fill="#d6d3d0" opacity="0.8"/><rect x="451.3" y="388.0" width="4.900" height="54.2" fill="url(#gb)"/><rect x="456.2" y="384.3" width="4.900" height="57.9" fill="url(#go)"/><rect x="469.5" y="338.0" width="3" height="104.2" fill="#c9ccd4" opacity="0.7"/><rect x="474.4" y="386.2" width="2.600" height="56.0" fill="#d6d3d0" opacity="0.8"/><rect x="464.7" y="336.0" width="4.900" height="106.2" fill="url(#gb)"/><rect x="469.6" y="384.2" width="4.900" height="58.0" fill="url(#go)"/><rect x="483.0" y="281.0" width="3" height="161.2" fill="#c9ccd4" opacity="0.7"/><rect x="487.9" y="386.1" width="2.600" height="56.1" fill="#d6d3d0" opacity="0.8"/><rect x="478.2" y="279.0" width="4.900" height="163.2" fill="url(#gb)"/><rect x="483.1" y="384.1" width="4.900" height="58.1" fill="url(#go)"/><rect x="496.4" y="391.3" width="3" height="50.9" fill="#c9ccd4" opacity="0.7"/><rect x="501.3" y="386.0" width="2.600" height="56.2" fill="#d6d3d0" opacity="0.8"/><rect x="491.6" y="389.3" width="4.900" height="52.9" fill="url(#gb)"/><rect x="496.5" y="384.0" width="4.900" height="58.2" fill="url(#go)"/><rect x="509.8" y="337.0" width="3" height="105.2" fill="#c9ccd4" opacity="0.7"/><rect x="514.7" y="385.9" width="2.600" height="56.3" fill="#d6d3d0" opacity="0.8"/><rect x="505.0" y="335.0" width="4.900" height="107.2" fill="url(#gb)"/><rect x="509.9" y="383.9" width="4.900" height="58.3" fill="url(#go)"/><rect x="523.3" y="277.4" width="3" height="164.8" fill="#c9ccd4" opacity="0.7"/><rect x="528.2" y="385.8" width="2.600" height="56.4" fill="#d6d3d0" opacity="0.8"/><rect x="518.5" y="275.4" width="4.900" height="166.8" fill="url(#gb)"/><rect x="523.4" y="383.8" width="4.900" height="58.4" fill="url(#go)"/><rect x="536.7" y="388.0" width="3" height="54.2" fill="#c9ccd4" opacity="0.7"/><rect x="541.6" y="385.7" width="2.600" height="56.5" fill="#d6d3d0" opacity="0.8"/><rect x="531.9" y="386.0" width="4.900" height="56.2" fill="url(#gb)"/><rect x="536.8" y="383.7" width="4.900" height="58.5" fill="url(#go)"/><rect x="550.2" y="329.2" width="3" height="113.0" fill="#c9ccd4" opacity="0.7"/><rect x="555.1" y="385.6" width="2.600" height="56.6" fill="#d6d3d0" opacity="0.8"/><rect x="545.4" y="327.2" width="4.900" height="115.0" fill="url(#gb)"/><rect x="550.3" y="383.6" width="4.900" height="58.6" fill="url(#go)"/><rect x="563.6" y="279.0" width="3" height="163.2" fill="#c9ccd4" opacity="0.7"/><rect x="568.5" y="385.5" width="2.600" height="56.7" fill="#d6d3d0" opacity="0.8"/><rect x="558.8" y="277.0" width="4.900" height="165.2" fill="url(#gb)"/><rect x="563.7" y="383.5" width="4.900" height="58.7" fill="url(#go)"/><rect x="577.0" y="390.0" width="3" height="52.2" fill="#c9ccd4" opacity="0.7"/><rect x="581.9" y="385.4" width="2.600" height="56.8" fill="#d6d3d0" opacity="0.8"/><rect x="572.2" y="388.0" width="4.900" height="54.2" fill="url(#gb)"/><rect x="577.1" y="383.4" width="4.900" height="58.8" fill="url(#go)"/><rect x="590.5" y="333.0" width="3" height="109.2" fill="#c9ccd4" opacity="0.7"/><rect x="595.4" y="385.3" width="2.600" height="56.9" fill="#d6d3d0" opacity="0.8"/><rect x="585.7" y="331.0" width="4.900" height="111.2" fill="url(#gb)"/><rect x="590.6" y="383.3" width="4.900" height="58.9" fill="url(#go)"/><rect x="603.9" y="270.2" width="3" height="172.0" fill="#c9ccd4" opacity="0.7"/><rect x="608.8" y="385.2" width="2.600" height="57.0" fill="#d6d3d0" opacity="0.8"/><rect x="599.1" y="268.2" width="4.900" height="174.0" fill="url(#gb)"/><rect x="604.0" y="383.2" width="4.900" height="59.0" fill="url(#go)"/><rect x="617.4" y="388.0" width="3" height="54.2" fill="#c9ccd4" opacity="0.7"/><rect x="622.3" y="385.1" width="2.600" height="57.1" fill="#d6d3d0" opacity="0.8"/><rect x="612.6" y="386.0" width="4.900" height="56.2" fill="url(#gb)"/><rect x="617.5" y="383.1" width="4.900" height="59.1" fill="url(#go)"/><rect x="630.8" y="328.0" width="3" height="114.2" fill="#c9ccd4" opacity="0.7"/><rect x="635.7" y="385.0" width="2.600" height="57.2" fill="#d6d3d0" opacity="0.8"/><rect x="626.0" y="326.0" width="4.900" height="116.2" fill="url(#gb)"/><rect x="630.9" y="383.0" width="4.900" height="59.2" fill="url(#go)"/><rect x="644.2" y="272.0" width="3" height="170.2" fill="#c9ccd4" opacity="0.7"/><rect x="649.1" y="384.9" width="2.600" height="57.3" fill="#d6d3d0" opacity="0.8"/><rect x="639.4" y="270.0" width="4.900" height="172.2" fill="url(#gb)"/><rect x="644.3" y="382.9" width="4.900" height="59.3" fill="url(#go)"/><rect x="657.7" y="381.7" width="3" height="60.5" fill="#c9ccd4" opacity="0.7"/><rect x="662.6" y="384.8" width="2.600" height="57.4" fill="#d6d3d0" opacity="0.8"/><rect x="652.9" y="379.7" width="4.900" height="62.5" fill="url(#gb)"/><rect x="657.8" y="382.8" width="4.900" height="59.4" fill="url(#go)"/><rect x="671.1" y="333.0" width="3" height="109.2" fill="#c9ccd4" opacity="0.7"/><rect x="676.0" y="384.7" width="2.600" height="57.5" fill="#d6d3d0" opacity="0.8"/><rect x="666.3" y="331.0" width="4.900" height="111.2" fill="url(#gb)"/><rect x="671.2" y="382.7" width="4.900" height="59.5" fill="url(#go)"/><rect x="684.6" y="268.0" width="3" height="174.2" fill="#c9ccd4" opacity="0.7"/><rect x="689.5" y="384.6" width="2.600" height="57.6" fill="#d6d3d0" opacity="0.8"/><rect x="679.8" y="266.0" width="4.900" height="176.2" fill="url(#gb)"/><rect x="684.7" y="382.6" width="4.900" height="59.6" fill="url(#go)"/><rect x="698.0" y="395.3" width="3" height="46.9" fill="#c9ccd4" opacity="0.7"/><rect x="702.9" y="384.5" width="2.600" height="57.7" fill="#d6d3d0" opacity="0.8"/><rect x="693.2" y="393.3" width="4.900" height="48.9" fill="url(#gb)"/><rect x="698.1" y="382.5" width="4.900" height="59.7" fill="url(#go)"/><rect x="711.4" y="332.0" width="3" height="110.2" fill="#c9ccd4" opacity="0.7"/><rect x="716.3" y="384.4" width="2.600" height="57.8" fill="#d6d3d0" opacity="0.8"/><rect x="706.6" y="330.0" width="4.900" height="112.2" fill="url(#gb)"/><rect x="711.5" y="382.4" width="4.900" height="59.8" fill="url(#go)"/><rect x="724.9" y="273.0" width="3" height="169.2" fill="#c9ccd4" opacity="0.7"/><rect x="729.8" y="384.3" width="2.600" height="57.9" fill="#d6d3d0" opacity="0.8"/><rect x="720.1" y="271.0" width="4.900" height="171.2" fill="url(#gb)"/><rect x="725.0" y="382.3" width="4.900" height="59.9" fill="url(#go)"/><rect x="738.3" y="380.4" width="3" height="61.8" fill="#c9ccd4" opacity="0.7"/><rect x="743.2" y="384.2" width="2.600" height="58.0" fill="#d6d3d0" opacity="0.8"/><rect x="733.5" y="378.4" width="4.900" height="63.8" fill="url(#gb)"/><rect x="738.4" y="382.2" width="4.900" height="60.0" fill="url(#go)"/><rect x="751.8" y="323.2" width="3" height="119.0" fill="#c9ccd4" opacity="0.7"/><rect x="756.7" y="384.1" width="2.600" height="58.1" fill="#d6d3d0" opacity="0.8"/><rect x="747.0" y="321.2" width="4.900" height="121.0" fill="url(#gb)"/><rect x="751.9" y="382.1" width="4.900" height="60.1" fill="url(#go)"/><rect x="765.2" y="269.1" width="3" height="173.1" fill="#c9ccd4" opacity="0.7"/><rect x="770.1" y="384.0" width="2.600" height="58.2" fill="#d6d3d0" opacity="0.8"/><rect x="760.4" y="267.1" width="4.900" height="175.1" fill="url(#gb)"/><rect x="765.3" y="382.0" width="4.900" height="60.2" fill="url(#go)"/><rect x="778.6" y="388.1" width="3" height="54.1" fill="#c9ccd4" opacity="0.7"/><rect x="783.5" y="383.9" width="2.600" height="58.3" fill="#d6d3d0" opacity="0.8"/><rect x="773.8" y="386.1" width="4.900" height="56.1" fill="url(#gb)"/><rect x="778.7" y="381.9" width="4.900" height="60.3" fill="url(#go)"/><rect x="792.1" y="328.2" width="3" height="114.0" fill="#c9ccd4" opacity="0.7"/><rect x="797.0" y="383.8" width="2.600" height="58.4" fill="#d6d3d0" opacity="0.8"/><rect x="787.3" y="326.2" width="4.900" height="116.0" fill="url(#gb)"/><rect x="792.2" y="381.8" width="4.900" height="60.4" fill="url(#go)"/><rect x="805.5" y="273.0" width="3" height="169.2" fill="#c9ccd4" opacity="0.7"/><rect x="810.4" y="383.7" width="2.600" height="58.5" fill="#d6d3d0" opacity="0.8"/><rect x="800.7" y="271.0" width="4.900" height="171.2" fill="url(#gb)"/><rect x="805.6" y="381.7" width="4.900" height="60.5" fill="url(#go)"/><rect x="819.0" y="387.3" width="3" height="54.9" fill="#c9ccd4" opacity="0.7"/><rect x="823.9" y="383.6" width="2.600" height="58.6" fill="#d6d3d0" opacity="0.8"/><rect x="814.2" y="385.3" width="4.900" height="56.9" fill="url(#gb)"/><rect x="819.1" y="381.6" width="4.900" height="60.6" fill="url(#go)"/><rect x="832.4" y="332.0" width="3" height="110.2" fill="#c9ccd4" opacity="0.7"/><rect x="837.3" y="383.5" width="2.600" height="58.7" fill="#d6d3d0" opacity="0.8"/><rect x="827.6" y="330.0" width="4.900" height="112.2" fill="url(#gb)"/><rect x="832.5" y="381.5" width="4.900" height="60.7" fill="url(#go)"/><line x1="355.500" y1="254" x2="355.500" y2="443" stroke="#9a9a9a" stroke-width="1"/><line x1="355" y1="442.500" x2="841" y2="442.500" stroke="#9a9a9a" stroke-width="1"/><text x="358" y="459.0" text-anchor="middle" font-size="11" fill="#333">BY 2006 BY 2006 Q1</text><text x="358" y="470.0" text-anchor="middle" font-size="11" fill="#333">Jan 2006</text><text x="358" y="481.0" text-anchor="middle" font-size="11" fill="#333" textLength="112" lengthAdjust="spacingAndGlyphs">EH_Palomino_BSC_143</text><text x="358" y="492.0" text-anchor="middle" font-size="11" fill="#333">San Francisco</text><text x="493" y="459.0" text-anchor="middle" font-size="11" fill="#333">BY 2006 BY 2006 Q2</text><text x="493" y="470.0" text-anchor="middle" font-size="11" fill="#333">Apr 2006</text><text x="493" y="481.0" text-anchor="middle" font-size="11" fill="#333" textLength="112" lengthAdjust="spacingAndGlyphs">EH_Palomino_BTS_101</text><text x="493" y="492.0" text-anchor="middle" font-size="11" fill="#333">San Francisco</text><text x="628" y="459.0" text-anchor="middle" font-size="11" fill="#333">BY 2006 BY 2006 Q3</text><text x="628" y="470.0" text-anchor="middle" font-size="11" fill="#333">Jul 2006</text><text x="628" y="481.0" text-anchor="middle" font-size="11" fill="#333" textLength="102" lengthAdjust="spacingAndGlyphs">EH_Walker_BTS_902</text><text x="628" y="492.0" text-anchor="middle" font-size="11" fill="#333">San Francisco</text><text x="763" y="459.0" text-anchor="middle" font-size="11" fill="#333">BY 2006 BY 2006 Q4</text><text x="763" y="470.0" text-anchor="middle" font-size="11" fill="#333">Nov 2006</text><text x="763" y="481.0" text-anchor="middle" font-size="11" fill="#333" textLength="112" lengthAdjust="spacingAndGlyphs">EH_Palomino_BSC_143</text><text x="763" y="492.0" text-anchor="middle" font-size="11" fill="#333">San Francisco</text><text x="592" y="513.500" text-anchor="middle" font-size="12.500" fill="#7d81a3">Business Year, Business Quarter, Business Month, Network Element, City Name</text><rect x="855" y="332" width="10" height="10" fill="url(#gb)"/><rect x="855" y="355" width="10" height="10" fill="url(#go)"/><text x="868" y="335" font-size="11" fill="#3c3f5e">Dropped</text><text x="868" y="346" font-size="11" fill="#3c3f5e">Call Rate</text><text x="868" y="357" font-size="11" fill="#3c3f5e">Failed Call</text><text x="868" y="368" font-size="11" fill="#3c3f5e">Rate</text></svg>
<div class="a" style="left:249px;top:569px;width:743px;height:123px;overflow:hidden">
<div class="a" style="left:4px;top:28px;width:91px;height:30px;border:1px solid #9a9a94;background:linear-gradient(#fdfdf0,#f3f2dc 50%,#dcdac8);padding-top:2px;padding-left:1px;font-size:11px;letter-spacing:-0.3px;line-height:13px;color:#1f3fa0;overflow:hidden;white-space:nowrap">Business<br>Year</div>
<div class="a" style="left:94px;top:28px;width:108px;height:30px;border:1px solid #9a9a94;background:linear-gradient(#fdfdf0,#f3f2dc 50%,#dcdac8);padding-top:2px;padding-left:1px;font-size:11px;letter-spacing:-0.3px;line-height:13px;color:#1f3fa0;overflow:hidden;white-space:nowrap">Business<br>Quarter</div>
<div class="a" style="left:201px;top:28px;width:99px;height:30px;border:1px solid #9a9a94;background:linear-gradient(#fdfdf0,#f3f2dc 50%,#dcdac8);padding-top:2px;padding-left:1px;font-size:11px;letter-spacing:-0.3px;line-height:13px;color:#1f3fa0;overflow:hidden;white-space:nowrap">Business<br>Month</div>
<div class="a" style="left:299px;top:28px;width:117px;height:30px;border:1px solid #9a9a94;background:linear-gradient(#fdfdf0,#f3f2dc 50%,#dcdac8);padding-top:2px;padding-left:1px;font-size:11px;letter-spacing:-0.3px;line-height:13px;color:#1f3fa0;overflow:hidden;white-space:nowrap"><div style="padding-top:6px">Network Element</div></div>
<div class="a" style="left:415px;top:28px;width:78px;height:30px;border:1px solid #9a9a94;background:linear-gradient(#fdfdf0,#f3f2dc 50%,#dcdac8);padding-top:2px;padding-left:1px;font-size:11px;letter-spacing:-0.3px;line-height:13px;color:#1f3fa0;overflow:hidden;white-space:nowrap">City<br>Name</div>
<div class="a" style="left:492px;top:28px;width:110px;height:30px;border:1px solid #9a9a94;background:linear-gradient(#fdfdf0,#f3f2dc 50%,#dcdac8);padding-top:2px;padding-left:1px;font-size:11px;letter-spacing:-0.3px;line-height:13px;color:#222;overflow:hidden;white-space:nowrap">Dropped Call<br>Rate</div>
<div class="a" style="left:601px;top:28px;width:98px;height:30px;border:1px solid #9a9a94;background:linear-gradient(#fdfdf0,#f3f2dc 50%,#dcdac8);padding-top:2px;padding-left:1px;font-size:11px;letter-spacing:-0.3px;line-height:13px;color:#222;overflow:hidden;white-space:nowrap">Failed Call<br>Rate</div>
<div class="a" style="left:4px;top:57px;width:91px;height:95px;border:1px solid #9a9a94;background:#fff;padding-left:1px;font-size:11px;letter-spacing:-0.3px;line-height:13px;color:#1f3fa0;overflow:hidden;white-space:nowrap"><div style="padding-top:2px">BY 2006</div></div>
<div class="a" style="left:94px;top:57px;width:108px;height:95px;border:1px solid #9a9a94;background:#fff;padding-left:1px;font-size:11px;letter-spacing:-0.3px;line-height:13px;color:#1f3fa0;overflow:hidden;white-space:nowrap"><div style="padding-top:2px">BY 2006 Q1</div></div>
<div class="a" style="left:201px;top:57px;width:99px;height:49px;border:1px solid #9a9a94;background:#fff;padding-left:1px;font-size:11px;letter-spacing:-0.3px;line-height:13px;color:#1f3fa0;overflow:hidden;white-space:nowrap"><div style="padding-top:2px">Jan 2006</div></div>
<div class="a" style="left:201px;top:105px;width:99px;height:47px;border:1px solid #9a9a94;background:#fff;padding-left:1px;font-size:11px;letter-spacing:-0.3px;line-height:13px;color:#1f3fa0;overflow:hidden;white-space:nowrap"><div style="padding-top:2px">Feb 2006</div></div>
<div class="a" style="left:299px;top:57px;width:117px;height:17px;border:1px solid #9a9a94;background:#fff;padding-left:1px;font-size:11px;letter-spacing:-0.3px;line-height:13px;color:#1f3fa0;overflow:hidden;white-space:nowrap"><div style="padding-top:2px;letter-spacing:-0.5px">EH_Palomino_BSC_143</div></div>
<div class="a" style="left:415px;top:57px;width:78px;height:17px;border:1px solid #9a9a94;background:#fff;padding-left:1px;font-size:11px;letter-spacing:-0.3px;line-height:13px;color:#1f3fa0;overflow:hidden;white-space:nowrap"><div style="padding-top:2px">San Francisco</div></div>
<div class="a" style="left:492px;top:57px;width:110px;height:17px;border:1px solid #9a9a94;background:#fff;text-align:right;padding-right:4px;font-size:11px;letter-spacing:-0.3px;line-height:13px;color:#222;overflow:hidden;white-space:nowrap"><div style="padding-top:2px">7.76%</div></div>
<div class="a" style="left:601px;top:57px;width:98px;height:17px;border:1px solid #9a9a94;background:#fff;text-align:right;padding-right:4px;font-size:11px;letter-spacing:-0.3px;line-height:13px;color:#222;overflow:hidden;white-space:nowrap"><div style="padding-top:2px">2.74%</div></div>
<div class="a" style="left:299px;top:73px;width:117px;height:17px;border:1px solid #9a9a94;background:#fff;padding-left:1px;font-size:11px;letter-spacing:-0.3px;line-height:13px;color:#1f3fa0;overflow:hidden;white-space:nowrap"><div style="padding-top:2px;letter-spacing:-0.5px">EH_Palomino_BTS_101</div></div>
<div class="a" style="left:415px;top:73px;width:78px;height:17px;border:1px solid #9a9a94;background:#fff;padding-left:1px;font-size:11px;letter-spacing:-0.3px;line-height:13px;color:#1f3fa0;overflow:hidden;white-space:nowrap"><div style="padding-top:2px">San Francisco</div></div>
<div class="a" style="left:492px;top:73px;width:110px;height:17px;border:1px solid #9a9a94;background:#fff;text-align:right;padding-right:4px;font-size:11px;letter-spacing:-0.3px;line-height:13px;color:#222;overflow:hidden;white-space:nowrap"><div style="padding-top:2px">2.45%</div></div>
<div class="a" style="left:601px;top:73px;width:98px;height:17px;border:1px solid #9a9a94;background:#fff;text-align:right;padding-right:4px;font-size:11px;letter-spacing:-0.3px;line-height:13px;color:#222;overflow:hidden;white-space:nowrap"><div style="padding-top:2px">2.74%</div></div>
<div class="a" style="left:299px;top:89px;width:117px;height:17px;border:1px solid #9a9a94;background:#fff;padding-left:1px;font-size:11px;letter-spacing:-0.3px;line-height:13px;color:#1f3fa0;overflow:hidden;white-space:nowrap"><div style="padding-top:2px;letter-spacing:-0.5px">EH_Walker_BTS_902</div></div>
<div class="a" style="left:415px;top:89px;width:78px;height:17px;border:1px solid #9a9a94;background:#fff;padding-left:1px;font-size:11px;letter-spacing:-0.3px;line-height:13px;color:#1f3fa0;overflow:hidden;white-space:nowrap"><div style="padding-top:2px">San Francisco</div></div>
<div class="a" style="left:492px;top:89px;width:110px;height:17px;border:1px solid #9a9a94;background:#fff;text-align:right;padding-right:4px;font-size:11px;letter-spacing:-0.3px;line-height:13px;color:#222;overflow:hidden;white-space:nowrap"><div style="padding-top:2px">5.30%</div></div>
<div class="a" style="left:601px;top:89px;width:98px;height:17px;border:1px solid #9a9a94;background:#fff;text-align:right;padding-right:4px;font-size:11px;letter-spacing:-0.3px;line-height:13px;color:#222;overflow:hidden;white-space:nowrap"><div style="padding-top:2px">2.75%</div></div>
<div class="a" style="left:299px;top:105px;width:117px;height:17px;border:1px solid #9a9a94;background:#fff;padding-left:1px;font-size:11px;letter-spacing:-0.3px;line-height:13px;color:#1f3fa0;overflow:hidden;white-space:nowrap"><div style="padding-top:2px;letter-spacing:-0.5px">EH_Palomino_BSC_143</div></div>
<div class="a" style="left:415px;top:105px;width:78px;height:17px;border:1px solid #9a9a94;background:#fff;padding-left:1px;font-size:11px;letter-spacing:-0.3px;line-height:13px;color:#1f3fa0;overflow:hidden;white-space:nowrap"><div style="padding-top:2px">San Francisco</div></div>
<div class="a" style="left:492px;top:105px;width:110px;height:17px;border:1px solid #9a9a94;background:#fff;text-align:right;padding-right:4px;font-size:11px;letter-spacing:-0.3px;line-height:13px;color:#222;overflow:hidden;white-space:nowrap"><div style="padding-top:2px">6.87%</div></div>
<div class="a" style="left:601px;top:105px;width:98px;height:17px;border:1px solid #9a9a94;background:#fff;text-align:right;padding-right:4px;font-size:11px;letter-spacing:-0.3px;line-height:13px;color:#222;overflow:hidden;white-space:nowrap"><div style="padding-top:2px">2.76%</div></div>
<div class="a" style="left:299px;top:121px;width:117px;height:17px;border:1px solid #9a9a94;background:#fff;padding-left:1px;font-size:11px;letter-spacing:-0.3px;line-height:13px;color:#1f3fa0;overflow:hidden;white-space:nowrap"><div style="padding-top:2px;letter-spacing:-0.5px">EH_Palomino_BTS_101</div></div>
<div class="a" style="left:415px;top:121px;width:78px;height:17px;border:1px solid #9a9a94;background:#fff;padding-left:1px;font-size:11px;letter-spacing:-0.3px;line-height:13px;color:#1f3fa0;overflow:hidden;white-space:nowrap"><div style="padding-top:2px">San Francisco</div></div>
<div class="a" style="left:492px;top:121px;width:110px;height:17px;border:1px solid #9a9a94;background:#fff;text-align:right;padding-right:4px;font-size:11px;letter-spacing:-0.3px;line-height:13px;color:#222;overflow:hidden;white-space:nowrap"><div style="padding-top:2px">2.50%</div></div>
<div class="a" style="left:601px;top:121px;width:98px;height:17px;border:1px solid #9a9a94;background:#fff;text-align:right;padding-right:4px;font-size:11px;letter-spacing:-0.3px;line-height:13px;color:#222;overflow:hidden;white-space:nowrap"><div style="padding-top:2px">2.77%</div></div>
</div>
<div class="a" style="left:237px;top:692px;width:1165px;height:1px;background:repeating-linear-gradient(to right,#333 0,#333 1px,#999 1px,#999 2px)"></div>
<div class="a" style="left:237px;top:695px;width:1175px;height:20px;background:linear-gradient(#d3d3bf,#dcdccb 45%,#f3f3eb);border:1px solid #a9a995;border-bottom-color:#9c9c9c"></div>
<div class="pm p" style="left:241px;top:701px;border-color:#666"></div>
<div class="t ph" style="left:252px;top:699px">Selection Steps</div>
<div class="a" style="left:0;top:715px;width:1402px;height:2px;background:#dbe3f2"></div>
<div class="a" style="left:0;top:717px;width:1402px;height:5px;background:#0b4a94"></div>
<div class="a" style="left:0;top:722px;width:1402px;height:1px;background:#fff"></div>
<div class="a" style="left:0;top:723px;width:1402px;height:2px;background:#b4b4ac"></div>
</div>
</body>
</html>
